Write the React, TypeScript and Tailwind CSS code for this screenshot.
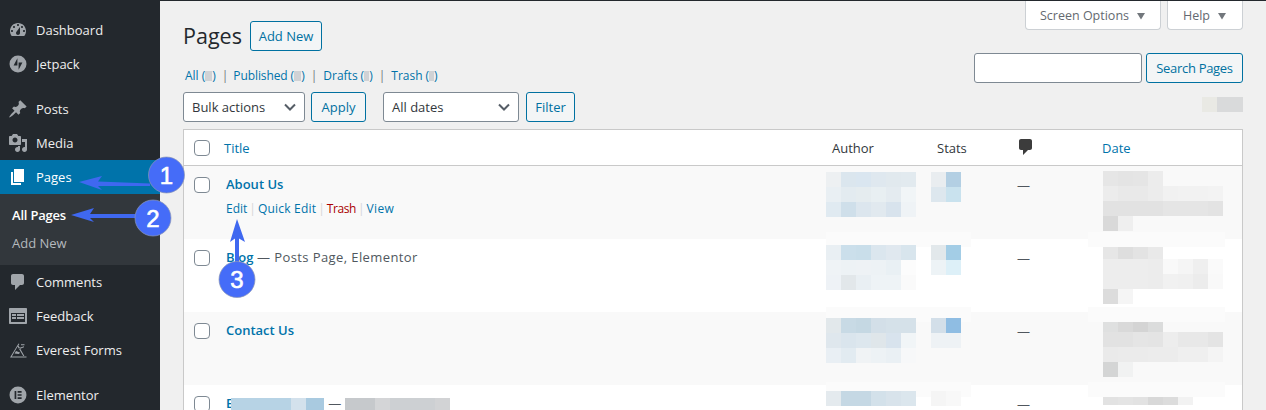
const font = "font-['Open_Sans','Noto_Sans',sans-serif]";

function Icon({ d, className = '' }: { d: string; className?: string }) {
  return (
    <svg viewBox="0 0 20 20" width="20" height="20" fill="currentColor" fillRule="evenodd" className={className}>
      <path d={d} />
    </svg>
  );
}

const ICONS = {
  dashboard:
    'M3.76 16h12.48c1.1-1.37 1.76-3.11 1.76-5 0-4.42-3.58-8-8-8s-8 3.58-8 8c0 1.89.66 3.63 1.76 5zM10 4c.55 0 1 .45 1 1s-.45 1-1 1-1-.45-1-1 .45-1 1-1zM6 6c.55 0 1 .45 1 1s-.45 1-1 1-1-.45-1-1 .45-1 1-1zm8 0c.55 0 1 .45 1 1s-.45 1-1 1-1-.45-1-1 .45-1 1-1zm-5.37 5.55L12 7v6c0 1.1-.9 2-2 2s-2-.9-2-2c0-.57.24-1.08.63-1.45zM4 10c.55 0 1 .45 1 1s-.45 1-1 1-1-.45-1-1 .45-1 1-1zm12 0c.55 0 1 .45 1 1s-.45 1-1 1-1-.45-1-1 .45-1 1-1z',
  jetpack:
    'M10 1.5a8.5 8.5 0 1 0 0 17 8.5 8.5 0 0 0 0-17zM9.4 4.2v7.4H5.6l3.8-7.4zM10.6 15.8V8.4h3.8l-3.8 7.4z',
  posts:
    'M10.44 3.02l1.82-1.82 6.36 6.35-1.83 1.82c-1.05-.68-2.48-.57-3.41.36l-.75.75c-.92.93-1.04 2.35-.35 3.41l-1.83 1.82-2.41-2.41-2.8 2.79c-.42.42-3.38 2.71-3.8 2.29s1.86-3.39 2.28-3.81l2.79-2.79L4.1 9.36l1.83-1.82c1.05.69 2.48.57 3.4-.36l.75-.75c.93-.92 1.05-2.35.36-3.41z',
  media:
    'M13 11V4c0-.55-.45-1-1-1h-1.67L9 1H5L3.67 3H2c-.55 0-1 .45-1 1v7c0 .55.45 1 1 1h10c.55 0 1-.45 1-1zM7 4.5c1.38 0 2.5 1.12 2.5 2.5S8.38 9.5 7 9.5 4.5 8.38 4.5 7 5.62 4.5 7 4.5zM14 6h5v10.5c0 1.38-1.12 2.5-2.5 2.5S14 17.88 14 16.5s1.12-2.5 2.5-2.5c.17 0 .34.02.5.05V9h-3V6zm-4 8.05V13h2v3.5c0 1.38-1.12 2.5-2.5 2.5S7 17.88 7 16.5 8.12 14 9.5 14c.17 0 .34.02.5.05z',
  pages: 'M6 15V2h10v13H6zm-1 1h8v2H3V5h2v11z',
  comments: 'M5 2h9c1.1 0 2 .9 2 2v7c0 1.1-.9 2-2 2h-2l-5 5v-5H5c-1.1 0-2-.9-2-2V4c0-1.1.9-2 2-2z',
  feedback:
    'M2 2h16c.55 0 1 .45 1 1v14c0 .55-.45 1-1 1H2c-.55 0-1-.45-1-1V3c0-.55.45-1 1-1zm15 14V7H3v9h14zM4 8v2h4V8H4zm5 0v2h7V8H9zm-5 3v2h4v-2H4zm5 0v2h7v-2H9z',
  everest:
    'M2 17.5h16.5v-1H3.8L9.6 6.6l5.6 9.4h1.2L10.4 5.6l1-1.7-.9-.5L2 17.5zM11 8l5-1.8v1L11.6 9zM13 4.2h3.5v1H13zM8 11l4 1.5-1 1.5-4.5-.5z',
  elementor:
    'M10 1.5a8.5 8.5 0 1 0 0 17 8.5 8.5 0 0 0 0-17zM6.6 6h1.7v8H6.6V6zM9.6 6h4v1.7h-4V6zM9.6 9.15h4v1.7h-4v-1.7zM9.6 12.3h4V14h-4v-1.7z',
};

function MenuItem({ icon, label, active = false }: { icon: string; label: string; active?: boolean }) {
  return (
    <div className={`flex h-[34px] shrink-0 items-center ${active ? 'bg-[#0073aa] text-white' : 'text-[#eeeeee]'}`}>
      <div className={`flex w-[36px] justify-center ${active ? 'text-white' : 'text-[#a0a5aa]'}`}>
        <Icon d={icon} />
      </div>
      <span className="pt-[2px] text-[13px]">{label}</span>
    </div>
  );
}

function Sidebar() {
  return (
    <div className="flex h-[410px] w-[160px] shrink-0 flex-col overflow-hidden bg-[#23282d] pt-[13px]">
      <MenuItem icon={ICONS.dashboard} label="Dashboard" />
      <MenuItem icon={ICONS.jetpack} label="Jetpack" />
      <div className="h-[11px] shrink-0" />
      <MenuItem icon={ICONS.posts} label="Posts" />
      <MenuItem icon={ICONS.media} label="Media" />
      <MenuItem icon={ICONS.pages} label="Pages" active />
      <div className="flex h-[71px] shrink-0 flex-col bg-[#32373c] pl-[12px] pt-[8px] text-[13px]">
        <div className="flex h-[28px] items-center font-semibold tracking-[-0.2px] text-white">All Pages</div>
        <div className="flex h-[28px] items-center text-[#b4b9be]">Add New</div>
      </div>
      <MenuItem icon={ICONS.comments} label="Comments" />
      <MenuItem icon={ICONS.feedback} label="Feedback" />
      <MenuItem icon={ICONS.everest} label="Everest Forms" />
      <div className="h-[11px] shrink-0" />
      <MenuItem icon={ICONS.elementor} label="Elementor" />
    </div>
  );
}

function Btn({ children, className = '' }: { children: React.ReactNode; className?: string }) {
  return (
    <div className={`flex h-[30px] items-center justify-center rounded-[3px] border border-[#0071a1] bg-[#f3f5f6] pt-[1px] text-[13px] text-[#0071a1] ${className}`}>
      {children}
    </div>
  );
}

function Select({ label, className = '' }: { label: string; className?: string }) {
  return (
    <div className={`flex h-[30px] items-center justify-between rounded-[3px] border border-[#7e8993] bg-white pl-[8px] pr-[8px] text-[13px] text-[#32373c] ${className}`}>
      <span className="pt-[1px]">{label}</span>
      <svg width="12" height="8" viewBox="0 0 12 8" fill="none" stroke="#555d66" strokeWidth="2">
        <path d="M1 1.5l5 5 5-5" />
      </svg>
    </div>
  );
}

function Count({ w }: { w: number }) {
  return (
    <span className="text-[#0073aa]">
      (<span className="inline-block h-[10px] bg-[#d0d2d5] align-[-1px]" style={{ width: w }} />)
    </span>
  );
}

function Sep() {
  return <span className="mx-[6px] text-[#72777c]">|</span>;
}

function Tab({ label, className = '' }: { label: string; className?: string }) {
  return (
    <div className={`flex h-[31px] items-center justify-center gap-[7px] rounded-b-[4px] border border-t-0 border-[#ccd0d4] bg-white pt-[5px] text-[12.5px] text-[#646970] ${className}`}>
      <span>{label}</span>
      <svg width="10" height="7" viewBox="0 0 10 7" fill="#72777c">
        <path d="M1 0h8L5 6.5z" />
      </svg>
    </div>
  );
}

function Mosaic({ rows, className = '' }: { rows: string[][]; className?: string }) {
  return (
    <div className={`flex flex-col ${className}`}>
      {rows.map((r, i) => (
        <div key={i} className="flex">
          {r.map((c, j) => (
            <div key={j} className="h-[15px] w-[15px]" style={{ background: c }} />
          ))}
        </div>
      ))}
    </div>
  );
}

function Checkbox() {
  return <div className="h-[16px] w-[16px] rounded-[4px] border border-[#7e8993] bg-white" />;
}

type RowData = {
  bg: string;
  title: React.ReactNode;
  actions?: boolean;
  author: string[][];
  stats: string[][];
  date: string[][];
  faintTop?: string;
};

function Row({ bg, title, actions, author, stats, date, faintTop }: RowData) {
  return (
    <div className={`relative flex h-[73px] shrink-0 ${bg}`}>
      {faintTop && (
        <>
          <div className={`absolute left-[642px] h-[15px] w-[145px] bg-[#fbfbfb] ${faintTop}`} />
          <div className={`absolute left-[904px] h-[15px] w-[137px] bg-[#fbfbfb] ${faintTop}`} />
        </>
      )}
      <div className="w-[40px] shrink-0 pl-[10px] pt-[11px]">
        <Checkbox />
      </div>
      <div className="w-[608px] shrink-0 pl-[2px] pt-[9px] text-[13px]">
        {title}
        {actions && (
          <div className="mt-[5px] flex h-[18px] items-center text-[12px] text-[#0073aa]">
            <span>Edit</span>
            <span className="mx-[2px] text-[#d5d6d7]">|</span>
            <span className="tracking-[0.2px]">Quick Edit</span>
            <span className="mx-[2px] text-[#d5d6d7]">|</span>
            <span className="tracking-[-0.4px] text-[#a00]">Trash</span>
            <span className="mx-[2px] text-[#d5d6d7]">|</span>
            <span className="tracking-[0.3px]">View</span>
          </div>
        )}
      </div>
      <div className="relative w-[105px] shrink-0 pt-[6px]">
        <Mosaic rows={author} className="-ml-[6px]" />
      </div>
      <div className="relative w-[82px] shrink-0 pt-[6px]">
        <Mosaic rows={stats} className="-ml-[6px]" />
      </div>
      <div className="-ml-[2px] mr-[2px] w-[83px] shrink-0 pt-[10px] text-[13px] text-[#50575e]">—</div>
      <div className="w-[140px] shrink-0 pt-[5px]">
        <Mosaic rows={date} className="ml-[1px]" />
      </div>
    </div>
  );
}

const R1 = {
  author: [
    ['#edf0f2', '#dbe6ee', '#dae6f0', '#dfe8ef', '#e1e9ee', '#e2eaef'],
    ['#e9eff3', '#e3ebf0', '#e5ecef', '#e8eff2', '#e4ebf0', '#f1f5f7'],
    ['#e0eaf1', '#cfdfea', '#dce6ee', '#e1e9ef', '#d8e3ed', '#eff3f6'],
  ],
  stats: [
    ['#e9edf0', '#b3cfe3'],
    ['#dde7ee', '#c9e2ee'],
  ],
  date: [
    ['#e6e6e6', '#e4e4e4', '#e5e5e5', '#ececec'],
    ['#ececec', '#e9e9e9', '#e9e9e9', '#ececec', '#f1f1f1', '#f2f2f2', '#f2f2f2', '#f3f3f3'],
    ['#e2e2e2', '#e2e2e2', '#e2e2e2', '#e2e2e2', '#e5e5e5', '#e5e5e5', '#e5e5e5', '#e3e3e3'],
    ['#d9d9d9', '#efefef'],
  ],
};
const R2 = {
  author: [
    ['#e9eff3', '#cbdfeb', '#c9deea', '#dbe6ee', '#e0e8ef', '#d8e5ed'],
    ['#eff3f6', '#edf2f5', '#eef2f5', '#edf2f5', '#e9f0f4', '#fcfcfc'],
    ['#eef2f6', '#e2e7ea', '#e9eff3', '#eef3f6', '#eef3f6', '#fafafa'],
  ],
  stats: [
    ['#e2e8eb', '#a3cde6'],
    ['#edf3f6', '#ddf0f8'],
  ],
  date: [
    ['#e6e6e6', '#dedede', '#e3e3e3', '#e9e9e9'],
    ['#ededed', '#ededed', '#ededed', '#ececec', '#f9f9f9', '#f5f5f5', '#efefef', '#fafafa'],
    ['#ededed', '#ededed', '#ededed', '#ececec', '#f1f1f1', '#f0f0f0', '#ececec', '#f9f9f9'],
    ['#dcdcdc', '#f5f5f5'],
  ],
};
const R3 = {
  author: [
    ['#e2e8eb', '#c8dae5', '#c5d8e3', '#d3dfe8', '#d5e1e9', '#d5e1e9'],
    ['#dfe7ed', '#dae5ed', '#dde7ee', '#dfe6ea', '#d8e3ed', '#f1f5f7'],
    ['#e9eff4', '#e2ebf1', '#f0f3f5', '#edf2f5', '#eaf0f4', '#f7f8f9'],
  ],
  stats: [
    ['#d3dfe9', '#8fbde3'],
    ['#eef2f5', '#eef2f5'],
  ],
  date: [
    ['#dfe0e0', '#d9d9d9', '#d4d4d4', '#dbdcdc'],
    ['#e2e2e2', '#e2e2e2', '#e5e5e5', '#e4e4e4', '#ededed', '#e8e8e8', '#e8e8e8', '#e4e4e4'],
    ['#eaeaea', '#ebebeb', '#ebebeb', '#ececec', '#ececec', '#efefef', '#efefef', '#f4f4f4'],
    ['#d4d5d5', '#f1f2f2'],
  ],
};
const R4 = {
  author: [['#e4eaee', '#c5d8e4', '#c5d8e4', '#d3e1ea', '#d8e3eb', '#dbe6ed']],
  stats: [['#f5f5f5', '#f8f8f8']],
  date: [['#e2e2e2', '#e4e4e4', '#e2e2e2', '#d8d8d8', '#dcdcdc', '#f2f2f2']],
};

const RowTitle = ({ children }: { children: React.ReactNode }) => (
  <span className="font-semibold text-[#0073aa]">{children}</span>
);

function Annotations() {
  const blue = '#3f68f0';
  return (
    <svg className="pointer-events-none absolute left-0 top-0" width="1266" height="410" viewBox="0 0 1266 410">
      <path d="M79 182L102 176L98 181.5L150 183.5V186L98 186L102 190Z" fill={blue} />
      <path d="M71 215L94 208L90 214H136V218H90L94 222Z" fill={blue} />
      <path d="M237 219L245 242L239 238.5V264H235V238.5L230 242Z" fill={blue} />
      {[
        [166.5, 175, '1'],
        [153, 218, '2'],
        [237, 279.5, '3'],
      ].map(([x, y, n]) => (
        <g key={n as string}>
          <circle cx={x as number} cy={y as number} r="18" fill="#456cf8" stroke="#8d97b5" strokeWidth="0.7" />
          <text
            x={x as number}
            y={(y as number) + 8.5}
            textAnchor="middle"
            fontSize="24"
            fontWeight="400"
            stroke="#ffffff"
            strokeWidth="0.6"
            fontFamily="'Liberation Sans', sans-serif"
            fill="#ffffff"
          >
            {n as string}
          </text>
        </g>
      ))}
    </svg>
  );
}

export default function App() {
  return (
    <div className={`relative flex h-[410px] w-[1266px] overflow-hidden bg-[#f0f0f0] ${font}`}>
      <Sidebar />
      <div className="flex min-w-0 flex-1 flex-col px-[23px]">
        <div className="flex h-[129px] shrink-0 justify-between">
          <div className="flex flex-col pt-[22px]">
            <div className="flex h-[27px] items-center">
              <span className="w-[58px] whitespace-nowrap text-[21.5px] leading-[27px] text-[#23282d]">Pages</span>
              <Btn className="ml-[9px] h-[27px] w-[72px] pt-[3px]">Add New</Btn>
            </div>
            <div className="mt-[17px] flex h-[18px] items-center pl-[2px] pt-[1px] text-[12px] text-[#0073aa]">
              <span>All </span>
              <span className="ml-[3px]"><Count w={7} /></span>
              <Sep />
              <span className="-ml-[1px] tracking-[-0.1px]">Published </span>
              <span className="ml-[3px]"><Count w={7} /></span>
              <Sep />
              <span>Drafts </span>
              <span className="ml-[3px]"><Count w={5} /></span>
              <Sep />
              <span>Trash </span>
              <span className="ml-[3px]"><Count w={5} /></span>
            </div>
            <div className="mt-[8px] flex items-center">
              <Select label="Bulk actions" className="w-[122px]" />
              <Btn className="ml-[6px] w-[55px]">Apply</Btn>
              <Select label="All dates" className="ml-[17px] w-[136px]" />
              <Btn className="ml-[7px] w-[49px]">Filter</Btn>
            </div>
          </div>
          <div className="flex flex-col items-end">
            <div className="-mt-[1px] flex gap-[6px]">
              <Tab label="Screen Options" className="w-[136px]" />
              <Tab label="Help" className="w-[76px]" />
            </div>
            <div className="mt-[23px] flex gap-[4px]">
              <div className="h-[30px] w-[168px] rounded-[3px] border border-[#7e8993] bg-white" />
              <Btn className="w-[97px] tracking-[-0.3px]">Search Pages</Btn>
            </div>
            <div className="mt-[14px] flex h-[15px]">
              <div className="w-[15px] bg-[#e9e9e4]" />
              <div className="w-[26px] bg-[#d9dadb]" />
            </div>
          </div>
        </div>
        <div className="flex min-h-0 flex-1 flex-col border border-[#c9c9c9] bg-white">
          <div className="flex h-[36px] shrink-0 items-center border-b border-[#c9c9c9] text-[13px] text-[#32373c]">
            <div className="w-[40px] shrink-0 pl-[10px]">
              <Checkbox />
            </div>
            <div className="w-[608px] shrink-0 pt-[2px] text-[#0073aa]">Title</div>
            <div className="w-[105px] shrink-0 pt-[2px]">Author</div>
            <div className="w-[82px] shrink-0 pt-[2px]">Stats</div>
            <div className="flex w-[83px] shrink-0 text-[#3c3c3c]">
              <Icon d={ICONS.comments} className="-ml-[3px] -mt-[2px]" />
            </div>
            <div className="w-[140px] shrink-0 pt-[2px] text-[#0073aa]">Date</div>
          </div>
          <Row bg="bg-[#f9f9f9]" title={<RowTitle>About Us</RowTitle>} actions {...R1} />
          <Row
            bg="bg-white"
            faintTop="-top-[7px]"
            title={
              <>
                <RowTitle>Blog</RowTitle>
                <span className="font-medium tracking-[0.4px] text-[#50575e]"> — Posts Page, Elementor</span>
              </>
            }
            {...R2}
          />
          <Row bg="bg-[#f9f9f9]" faintTop="-top-[5px]" title={<RowTitle>Contact Us</RowTitle>} {...R3} />
          <Row
            bg="bg-white"
            faintTop="-top-[3px]"
            title={
              <div className="flex items-center">
                <RowTitle>E</RowTitle>
                <div className="-ml-[2px] mt-[4px] flex h-[15px]">
                  <div className="w-[60px] bg-[#b7d3e5]" />
                  <div className="w-[15px] bg-[#d3e1ec]" />
                  <div className="w-[18px] bg-[#a9cae0]" />
                </div>
                <span className="ml-[4px] text-[#50575e]">—</span>
                <div className="ml-[4px] mt-[4px] flex h-[15px]">
                  <div className="w-[30px] bg-[#c6c9cc]" />
                  <div className="w-[15px] bg-[#d4d5d7]" />
                  <div className="w-[45px] bg-[#cdd0d3]" />
                  <div className="w-[15px] bg-[#d2d3d5]" />
                </div>
              </div>
            }
            {...R4}
          />
        </div>
      </div>
      <div className="absolute left-[160px] right-0 top-0 h-[1px] bg-[#23282d]" />
      <Annotations />
    </div>
  );
}
